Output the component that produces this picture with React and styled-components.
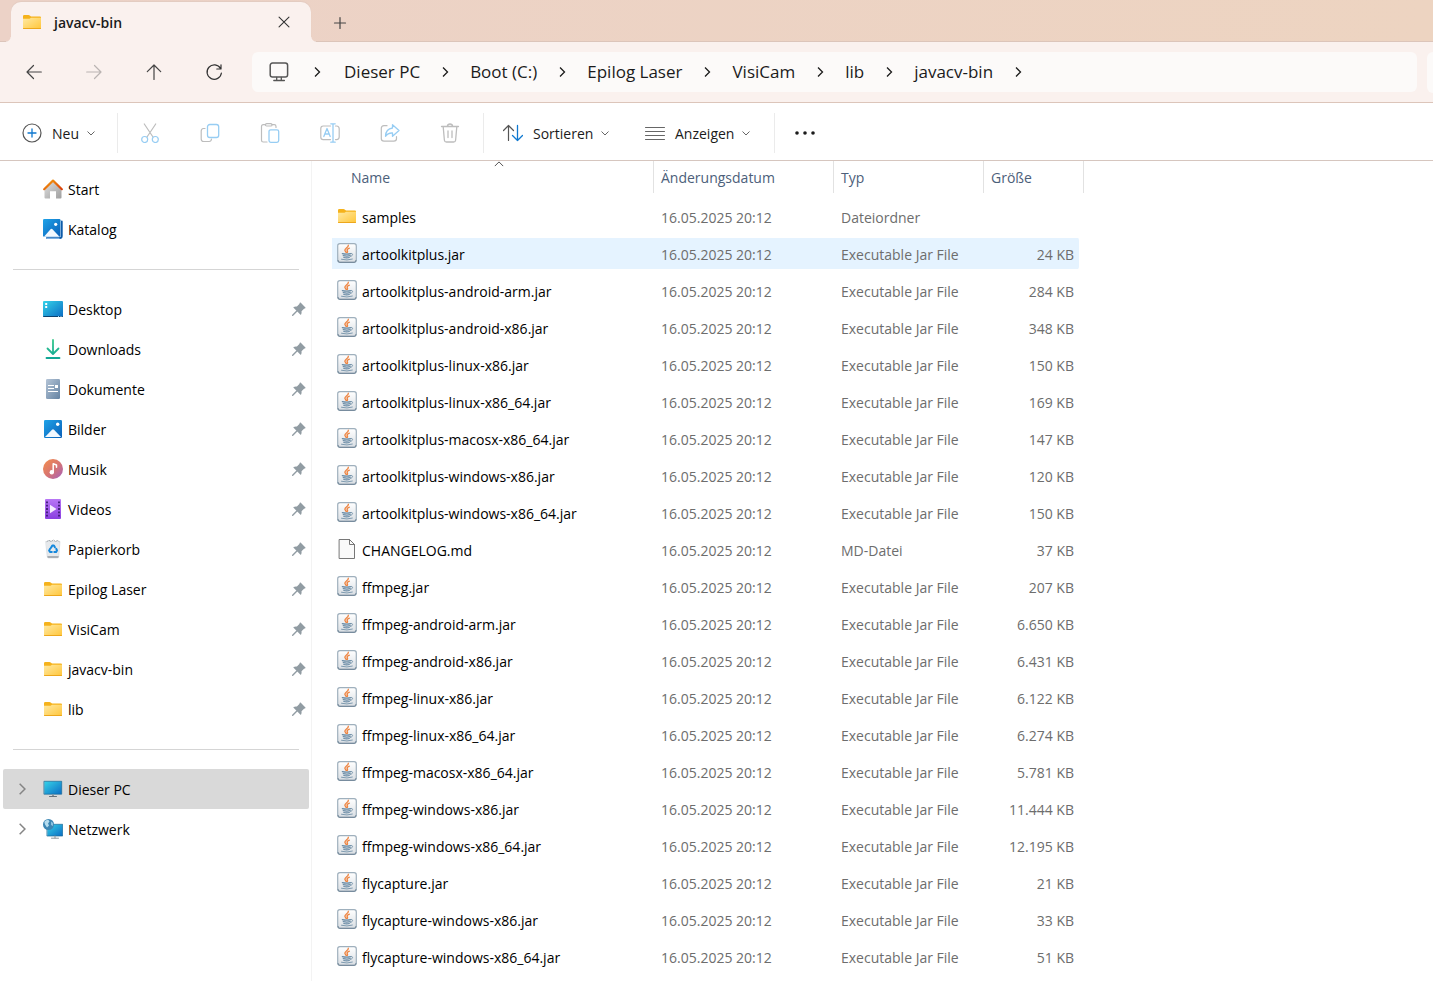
import React, { useState } from 'react'
import styled, { createGlobalStyle } from 'styled-components'

const GlobalStyle = createGlobalStyle`
* {
  box-sizing: border-box;
}
body {
  margin: 0;
  background: #ffffff;
  color: #000000;
  font-family: 'Open Sans', 'Noto Sans', sans-serif;
  font-size: 14px;
  line-height: 20px;
}
button {
  margin: 0;
  padding: 0;
  border: 0;
  background: none;
  color: inherit;
  font: inherit;
}
a {
  color: inherit;
  text-decoration: none;
}
svg {
  display: block;
  flex: none;
}
`
const Window = styled.div`
display: flex;
flex-direction: column;
min-height: 100vh;
`
const TabStrip = styled.header`
display: flex;
align-items: flex-end;
height: 42px;
padding-left: 11px;
background: linear-gradient(to right, #ecd2c7, #edd4c1);
box-shadow: inset 0 -1px #dcc5ba;
`
const Tab = styled.div`
position: relative;
display: flex;
align-items: center;
width: 300px;
height: 40px;
padding: 0 17px 0 11px;
border-radius: 10px 10px 0 0;
background: #faf1ee;
box-shadow: 0 -1px 1px #e3cbc0;
&::before,
&::after {
  content: '';
  position: absolute;
  bottom: 0;
  width: 5px;
  height: 5px;
}
&::before {
  right: 100%;
  background: radial-gradient(circle at 0 0, transparent 4px, #faf1ee 5px);
}
&::after {
  left: 100%;
  background: radial-gradient(circle at 100% 0, transparent 4px, #faf1ee 5px);
}
`
const TabTitle = styled.span`
flex: 1;
margin-left: 12px;
padding-top: 2px;
color: #1b1b1b;
font-weight: 600;
`
const TabButton = styled.button`
display: flex;
align-items: center;
justify-content: center;
width: 20px;
height: 20px;
`
const NewTab = styled(TabButton)`
width: 58px;
height: 38px;
`
const NavBar = styled.nav`
display: flex;
align-items: center;
height: 61px;
padding-left: 4px;
border-bottom: 1px solid #dcc5ba;
background: #faf1ee;
`
const NavButton = styled.button`
display: flex;
align-items: center;
justify-content: center;
width: 60px;
height: 40px;
opacity: ${props => props.disabled ? 0.35 : 1};
`
const Address = styled.div`
display: flex;
flex: 1;
align-items: center;
height: 40px;
margin: 0 10px 0 8px;
padding-left: 17px;
border-radius: 6px;
background: #fcfaf9;
color: #1b1b1b;
font-size: 17px;
line-height: 24px;
`
const CrumbArrow = styled.span`
display: flex;
justify-content: center;
width: ${props => props.$first ? 55 : 50}px;
`
const Search = styled.input`
width: 6px;
height: 41px;
padding: 0;
border: 0;
border-radius: 6px 0 0 6px;
background: #fcfaf9;
`
const Toolbar = styled.div`
display: flex;
align-items: center;
height: 58px;
padding-top: 2px;
border-bottom: 1px solid #d6c6bf;
color: #1b1b1b;
`
const ToolGroup = styled.div`
display: flex;
align-items: center;
height: 40px;
padding: ${props => props.$pad || 0};
border-right: ${props => props.$last ? 0 : 1}px solid #ebebeb;
`
const MenuButton = styled.button`
display: flex;
align-items: center;
gap: 6px;
width: ${props => props.$short ? 113 : 142}px;
padding-left: 18px;
white-space: nowrap;
span {
  padding: 2px 0 0 4px;
}
`
const ToolButton = styled.button`
display: flex;
align-items: center;
justify-content: center;
width: 60px;
height: 40px;
`
const Body = styled.div`
display: flex;
flex: 1;
`
const Sidebar = styled.aside`
flex: none;
width: 312px;
padding: 8px 2px 0 3px;
border-right: 1px solid #f3f3f3;
`
const NavList = styled.ul`
margin: 0;
padding: 0;
list-style: none;
`
const Divider = styled.hr`
height: 1px;
margin: 20px 10px 19px;
border: 0;
background: #d5d5d5;
`
const Place = styled.a`
display: grid;
grid-template-columns: 40px 20px 1fr 17px;
align-items: center;
height: 40px;
border-radius: 2px;
background: ${props => props.$active ? '#d9d9d9' : 'transparent'};
`
const Expander = styled.span`
display: flex;
justify-content: center;
padding-right: 2px;
`
const PlaceIcon = styled.span`
display: flex;
justify-content: center;
`
const PlaceName = styled.span`
padding: 2px 0 0 5px;
`
const Main = styled.main`
flex: 1;
min-width: 0;
padding-left: 20px;
`
const Files = styled.table`
width: 752px;
table-layout: fixed;
border-spacing: 0;
`
const Head = styled.th`
width: ${props => props.$width}px;
height: 37px;
padding: 0 0 5px;
font-weight: 400;
text-align: left;
`
const HeadButton = styled.button`
position: relative;
display: block;
width: 100%;
height: 32px;
padding: 2px 7px 0 ${props => props.$first ? 19 : 7}px;
border-right: 1px solid #e2e2e2;
color: #4c607a;
text-align: left;
`
const SortMark = styled.span`
position: absolute;
top: -2px;
left: 12px;
right: 0;
display: flex;
justify-content: center;
`
const Row = styled.tr`
td {
  background: ${props => props.$active ? '#e5f3ff' : 'transparent'};
  background-clip: padding-box;
}
`
const Cell = styled.td`
height: 37px;
padding: 2px 7px 0;
border: solid transparent;
border-width: 3px 0;
color: #6d6d6d;
white-space: nowrap;
`
const NameCell = styled(Cell)`
padding: 0 5px 2px;
border-radius: 3px 0 0 3px;
color: #000000;
`
const SizeCell = styled(Cell)`
padding: 2px 5px 0;
border-right-width: 5px;
border-radius: 0 6px 6px 0;
text-align: right;
`
const FileName = styled.a`
display: flex;
align-items: center;
gap: 5px;
span {
  padding-top: 4px;
}
`

const Icon = ({ size = 20, children }) => (
    <svg width={size} height={size} viewBox="0 0 20 20" fill="none" strokeLinecap="round" strokeLinejoin="round" aria-hidden="true">
        {children}
    </svg>
)

const Chevron = ({ dir = 'right', size = 12, color = '#1b1b1b', width = 1.3 }) => {
    const paths = { right: 'M4 1.5 8.5 6 4 10.5', down: 'M2.5 4.5 6 8l3.5-3.5', up: 'M1 8.500 6 3.5 11 8.500' }
    return (
        <svg width={size} height={size} viewBox="0 0 12 12" fill="none" aria-hidden="true">
            <path d={paths[dir]} stroke={color} strokeWidth={width} />
        </svg>
    )
}

/* Gradients are shared by every icon on the page */
const Gradients = () => (
    <svg width="0" height="0" style={{ position: 'absolute' }} aria-hidden="true">
        <defs>
            <linearGradient id="folder" x1="0" y1="0" x2="1" y2="1">
                <stop offset="0" stopColor="#ffe9a3" /><stop offset="1" stopColor="#ffc63a" />
            </linearGradient>
            <linearGradient id="blue" x1="0" y1="0" x2="1" y2="1">
                <stop offset="0" stopColor="#1fa3e8" /><stop offset="1" stopColor="#0a5fb8" />
            </linearGradient>
            <linearGradient id="screen" x1="0" y1="0" x2="1" y2="1">
                <stop offset="0" stopColor="#35d3e8" /><stop offset="1" stopColor="#0b6cc4" />
            </linearGradient>
            <linearGradient id="green" x1="0" y1="0" x2="0" y2="20" gradientUnits="userSpaceOnUse">
                <stop offset="0" stopColor="#38c98a" /><stop offset="1" stopColor="#0fa596" />
            </linearGradient>
            <linearGradient id="roof" x1="0" y1="0" x2="1" y2="1">
                <stop offset="0" stopColor="#f5a00f" /><stop offset="1" stopColor="#d93f0b" />
            </linearGradient>
            <linearGradient id="wall" x1="0" y1="0" x2="1" y2="1">
                <stop offset="0" stopColor="#dedede" /><stop offset="1" stopColor="#9f9f9f" />
            </linearGradient>
            <linearGradient id="music" x1="0" y1="0" x2="1" y2="1">
                <stop offset="0" stopColor="#f58f4c" /><stop offset="0.5" stopColor="#d9766f" /><stop offset="1" stopColor="#a35fc0" />
            </linearGradient>
            <linearGradient id="video" x1="0" y1="0" x2="0" y2="1">
                <stop offset="0" stopColor="#b877f5" /><stop offset="1" stopColor="#8a3fe0" />
            </linearGradient>
            <linearGradient id="paper" x1="0" y1="0" x2="1" y2="1">
                <stop offset="0" stopColor="#b4c4d6" /><stop offset="1" stopColor="#6483a3" />
            </linearGradient>
            <linearGradient id="jar" x1="0" y1="0" x2="0" y2="1">
                <stop offset="0" stopColor="#ffffff" /><stop offset="1" stopColor="#d9dee3" />
            </linearGradient>
        </defs>
    </svg>
)

const FolderIcon = () => (
    <Icon>
        <path d="M1 4.2q0-1.2 1.200-1.200h4.300q.7 0 1.200.5L9 4.500h9q1 0 1 1V10H1z" fill="#f5b21b" />
        <path d="M1 6.800h6.500L9 5.700h10v10.500q0 .8-.8.800H1.800q-.8 0-.8-.8z" fill="url(#folder)" />
        <path d="M1.500 16.500h17" stroke="#eda71c" />
    </Icon>
)
const JarIcon = () => (
    <Icon>
        <rect x=".7" y=".7" width="18.600" height="18.600" rx="2.200" fill="url(#jar)" stroke="#9fb0bd" strokeWidth="1.200" />
        <path d="M1 17.500q0 1.800 1.800 1.800h14.400q1.800 0 1.800-1.800" stroke="#6f8496" />
        <path d="M11.300 2.300c.6 2-3.600 2.800-3.400 5 .1 1 1 1.400 1.300 2.200M12.300 5.200c-1.500.6-2.500 1.200-2.200 2.200.2.700.8 1 .2 2" stroke="#ee8440" strokeWidth="1.400" />
        <path d="M5.300 10.700q4.500 1 8.500 0M6.200 12.700q3.800.9 7 0M6.800 14.500q3 .8 5.500 0" stroke="#6b8ca6" strokeWidth="1.200" />
        <path d="M14 10.500c2.700-.5 2 2.600-.6 2.900M4.500 16.300q5.500 1.500 10.800-.2" stroke="#7f9bb0" />
    </Icon>
)
const FileIcon = () => (
    <Icon>
        <path d="M2.500.5h10l5 5v14h-15z" fill="#fafafa" stroke="#777" strokeLinejoin="miter" />
        <path d="M12.500.5v5h5" stroke="#777" />
    </Icon>
)
const HomeIcon = () => (
    <Icon>
        <path d="M10 3 1.500 11v7.500q0 1 1 1H7v-7.300h6v7.300h4.500q1 0 1-1V11z" fill="url(#wall)" />
        <path d="M1.200 10.200 10 1.600l8.800 8.600" stroke="url(#roof)" strokeWidth="2.200" />
    </Icon>
)
const GalleryIcon = () => (
    <Icon>
        <path d="M18.800 2.500V17q0 2-2 2H4" stroke="#0d5ba8" strokeWidth="1.800" />
        <path d="M4 19.200h12" stroke="#7fb1e3" strokeWidth="1.500" />
        <rect width="17.500" height="17.800" rx="1.200" fill="url(#blue)" />
        <path d="m1 17.800 6.500-7.500q1-1 2 0l7 7.500z" fill="#f3f9ff" />
        <circle cx="12.700" cy="5.300" r="1.600" fill="#fff" />
    </Icon>
)
const PictureIcon = () => (
    <Icon>
        <rect x="1" y="1" width="18" height="18" rx="1.200" fill="url(#blue)" />
        <path d="m2 18 7-7.300q1-.9 2 0l7 7.300z" fill="#f3f9ff" />
        <circle cx="14.700" cy="5.300" r="1.700" fill="#fff" />
    </Icon>
)
const DesktopIcon = () => (
    <Icon>
        <rect y="2" width="20" height="16" rx="1" fill="url(#screen)" />
        <path d="M0 17h20q0 1-1 1H1q-1 0-1-1z" fill="#0b4270" />
        <path d="M2.200 4h2v2h-2zM2.200 7h2v2h-2z" fill="#fff" />
        <path d="M15 17.500h1m1.500 0h1" stroke="#9fd8f2" strokeLinecap="butt" />
    </Icon>
)
const DownloadIcon = () => (
    <Icon>
        <path d="M10 1v13.500M4.500 9.500 10 15l5.500-5.500M3.500 19h13" stroke="url(#green)" strokeWidth="1.800" />
    </Icon>
)
const DocumentIcon = () => (
    <Icon>
        <rect x="3" width="14" height="20" rx="1.200" fill="url(#paper)" />
        <path d="M5 6.500h6M5 9.500h6M5 12.500h10" stroke="#fff" strokeLinecap="butt" />
        <path d="M12 6h3v3h-3z" fill="#fff" />
    </Icon>
)
const MusicIcon = () => (
    <Icon>
        <circle cx="10" cy="10" r="10" fill="url(#music)" />
        <circle cx="8.800" cy="13.200" r="2.200" fill="#fff" />
        <path d="M10.200 13V4.700L13.500 6v2.200" stroke="#fff" strokeWidth="1.500" />
    </Icon>
)
const VideoIcon = () => (
    <Icon>
        <rect x="2" width="16" height="20" rx="1" fill="url(#video)" />
        <path d="M4 2.500v15M16 2.500v15" stroke="#3d1c73" strokeWidth="1.800" strokeDasharray="1.800 1.500" strokeLinecap="butt" />
        <path d="M7 5.700 13.500 10 7 14.300z" fill="#f5ecff" />
    </Icon>
)
const TrashBinIcon = () => (
    <Icon>
        <path d="M3 2.500h14L15.700 18q-.1 1-1.200 1h-9q-1.100 0-1.200-1z" fill="#e6e9ec" stroke="#ced3d8" strokeWidth=".6" />
        <path d="M4.300 17h11.400l-.2 1.300q-.1.700-1 .7h-9q-.9 0-1-.7z" fill="#a9afb5" />
        <path d="m4 2.500 2-1.300 2 1.300 2.500-1.500 2 1.500 2-1 1.500 1" stroke="#a4a9ae" strokeWidth="1" strokeDasharray="1.500 1.300" />
        <path d="M8 8.700 9.300 6.600h1.600l1 1.700M13.300 9.800l.7 1.700-1 1.600h-1.700M8.800 13.100H7l-.9-1.500.9-1.700" stroke="#1588dc" strokeWidth="2" />
    </Icon>
)
const MonitorIcon = () => (
    <Icon>
        <rect x="1.300" y="2.300" width="17.400" height="12.900" fill="url(#screen)" stroke="#1b6a97" strokeWidth=".7" />
        <path d="M9 15.500h2V17H9z" fill="#8b949c" />
        <path d="M6.500 17.500h7" stroke="#66717a" />
    </Icon>
)
const NetworkIcon = () => (
    <Icon>
        <rect x="4.300" y="5.300" width="15.400" height="11.700" fill="url(#screen)" stroke="#1b6a97" strokeWidth=".7" />
        <path d="M12 17v2M8.500 19.200h7" stroke="#8b949c" />
        <circle cx="5.500" cy="5.500" r="5.500" fill="#3c86b4" />
        <path d="M1.300 2.800Q3 .8 5.300.7L6.500 2.500 5 4.500 6 6.500 4 8.500 2 5.500z" fill="#b5dcee" />
        <path d="m8 2.500 2 1.500v3L8 6z" fill="#8cc3df" />
    </Icon>
)
const PinIcon = () => (
    <Icon size={14}>
        <path d="M12.200.8 19.200 7.800q.6.700-.3 1.100l-1.700.6-3.600 3.600q.5 2.700-.6 4.700-.5.700-1.200.1L2.200 8.300q-.6-.7.200-1.200 2-1 4.600-.6l3.500-3.600.6-1.800q.4-.9 1.100-.3z" fill="#919ca3" />
        <path d="m7 13-6 6" stroke="#919ca3" strokeWidth="2" />
    </Icon>
)
const PcOutline = () => (
    <Icon>
        <rect x="1.200" y="1" width="17.400" height="14" rx="2.300" stroke="#555" strokeWidth="1.500" />
        <path d="M7.700 15.500v2.700M12.300 15.500v2.700M4.800 18.500h10.600" stroke="#555" strokeWidth="1.300" />
    </Icon>
)
const BackIcon = () => <Icon><path d="M17.300 10H3M9.500 3.500 3 10l6.500 6.500" stroke="#444" strokeWidth="1.200" /></Icon>
const ForwardIcon = () => <Icon><path d="M2.700 10H17M10.500 3.500 17 10l-6.500 6.500" stroke="#444" strokeWidth="1.200" /></Icon>
const UpIcon = () => <Icon><path d="M10 17.500V3M3.300 9.700 10 3l6.700 6.700" stroke="#444" strokeWidth="1.200" /></Icon>
const ReloadIcon = () => <Icon><path d="M16.500 6.500A7.200 7.200 0 1 0 17.400 11M17 2.800v4.200h-4.200" stroke="#333" strokeWidth="1.200" /></Icon>

const NewIcon = () => (
    <Icon>
        <circle cx="10" cy="10" r="9" stroke="#555" strokeWidth="1.200" />
        <path d="M10 6v8M6 10h8" stroke="#0f78d0" strokeWidth="1.300" />
    </Icon>
)
const CutIcon = () => (
    <Icon>
        <path d="M4.300 1 13 14M15.700 1 7 14" stroke="#bdbdbd" strokeWidth="1.200" />
        <circle cx="4.700" cy="16.500" r="3" stroke="#97cdf3" strokeWidth="1.200" />
        <circle cx="15.300" cy="16.500" r="3" stroke="#97cdf3" strokeWidth="1.200" />
    </Icon>
)
const CopyIcon = () => (
    <Icon>
        <path d="M5 5.500H3.500Q1.200 5.800 1.200 8v8q0 2.500 2.500 2.500h5.500q2 0 2.300-2.500" stroke="#bdbdbd" strokeWidth="1.200" />
        <rect x="7.500" y="1.500" width="11.200" height="13" rx="2.300" stroke="#97cdf3" strokeWidth="1.300" />
    </Icon>
)
const PasteIcon = () => (
    <Icon>
        <path d="M5.500 1.700H3.300q-1.800 0-1.800 1.800v13.700q0 1.800 1.800 1.800H7M12 1.700h2.200q1.800 0 1.800 1.800v1" stroke="#bdbdbd" strokeWidth="1.200" />
        <rect x="5.500" y=".7" width="6.500" height="2.300" rx="1.100" stroke="#bdbdbd" strokeWidth="1.200" />
        <rect x="9" y="6.800" width="9.700" height="12.500" rx="1.700" stroke="#97cdf3" strokeWidth="1.300" />
    </Icon>
)
const RenameIcon = () => (
    <Icon>
        <path d="M10.500 3H3.200Q.8 3 .8 5.400v8.800q0 2.400 2.400 2.400h7.300M15.500 3h1q2.700.2 2.700 2.700v8.200q0 2.500-2.700 2.700h-1" stroke="#bdbdbd" strokeWidth="1.200" />
        <path d="m3.800 13.500 3.200-8 3.200 8M4.900 11h4.200M13 .8v18.400M10.800.8h4.400M10.800 19.200h4.400" stroke="#97cdf3" strokeWidth="1.300" />
    </Icon>
)
const ShareIcon = () => (
    <Icon>
        <path d="M7 2.700H4Q1.300 2.700 1.300 5.300v10.200q0 2.700 2.700 2.700h9.800q2.700 0 2.700-2.700V13.500" stroke="#bdbdbd" strokeWidth="1.200" />
        <path d="M12.500 5V1.700L19 7.500l-6.500 5.800V10q-4.500-.3-7 3.300Q5.800 5.800 12.500 5z" stroke="#97cdf3" strokeWidth="1.300" />
    </Icon>
)
const DeleteIcon = () => (
    <Icon>
        <path d="M1.500 3.500h17M3.200 3.700l1.200 13.500q.2 1.800 2 1.800h7.200q1.800 0 2-1.800l1.200-13.500M7.300 3.300q.4-2.300 2.700-2.300t2.700 2.300M8 8v6.500M12 8v6.500" stroke="#bdbdbd" strokeWidth="1.300" />
    </Icon>
)
const SortIcon = () => (
    <Icon>
        <path d="M5.500 17.500V2.500M.5 7.500l5-5 5 5" stroke="#555" strokeWidth="1.200" />
        <path d="M14.500 2.500v15M9.500 12.500l5 5 5-5" stroke="#0f78d0" strokeWidth="1.300" />
    </Icon>
)
const ViewIcon = () => <Icon><path d="M.5 4.500h19M.5 8.500h19M.5 12.500h19M.5 16.500h19" stroke="#666" /></Icon>
const MoreIcon = () => (
    <Icon>
        <circle cx="2" cy="10" r="1.800" fill="#1b1b1b" />
        <circle cx="10" cy="10" r="1.800" fill="#1b1b1b" />
        <circle cx="18" cy="10" r="1.800" fill="#1b1b1b" />
    </Icon>
)

const crumbs = ['Dieser PC', 'Boot (C:)', 'Epilog Laser', 'VisiCam', 'lib', 'javacv-bin']

const tools = [
    ['Ausschneiden', CutIcon],
    ['Kopieren', CopyIcon],
    ['Einfügen', PasteIcon],
    ['Umbenennen', RenameIcon],
    ['Freigeben', ShareIcon],
    ['Löschen', DeleteIcon],
]

const home = [
    ['Start', HomeIcon],
    ['Katalog', GalleryIcon],
]
const pinned = [
    ['Desktop', DesktopIcon],
    ['Downloads', DownloadIcon],
    ['Dokumente', DocumentIcon],
    ['Bilder', PictureIcon],
    ['Musik', MusicIcon],
    ['Videos', VideoIcon],
    ['Papierkorb', TrashBinIcon],
    ['Epilog Laser', FolderIcon],
    ['VisiCam', FolderIcon],
    ['javacv-bin', FolderIcon],
    ['lib', FolderIcon],
]
const devices = [
    ['Dieser PC', MonitorIcon],
    ['Netzwerk', NetworkIcon],
]

const files = [
    ['samples', ''],
    ['artoolkitplus.jar', '24 KB'],
    ['artoolkitplus-android-arm.jar', '284 KB'],
    ['artoolkitplus-android-x86.jar', '348 KB'],
    ['artoolkitplus-linux-x86.jar', '150 KB'],
    ['artoolkitplus-linux-x86_64.jar', '169 KB'],
    ['artoolkitplus-macosx-x86_64.jar', '147 KB'],
    ['artoolkitplus-windows-x86.jar', '120 KB'],
    ['artoolkitplus-windows-x86_64.jar', '150 KB'],
    ['CHANGELOG.md', '37 KB'],
    ['ffmpeg.jar', '207 KB'],
    ['ffmpeg-android-arm.jar', '6.650 KB'],
    ['ffmpeg-android-x86.jar', '6.431 KB'],
    ['ffmpeg-linux-x86.jar', '6.122 KB'],
    ['ffmpeg-linux-x86_64.jar', '6.274 KB'],
    ['ffmpeg-macosx-x86_64.jar', '5.781 KB'],
    ['ffmpeg-windows-x86.jar', '11.444 KB'],
    ['ffmpeg-windows-x86_64.jar', '12.195 KB'],
    ['flycapture.jar', '21 KB'],
    ['flycapture-windows-x86.jar', '33 KB'],
    ['flycapture-windows-x86_64.jar', '51 KB'],
]

const kindOf = name => {
    if (name.endsWith('.jar')) return ['Executable Jar File', JarIcon]
    if (name.endsWith('.md')) return ['MD-Datei', FileIcon]
    return ['Dateiordner', FolderIcon]
}

const Places = ({ items, pin, expand, current }) => (
    <NavList>
        {items.map(([name, Glyph]) => (
            <li key={name}>
                <Place href="#" $active={name === current}>
                    <Expander>{expand && <Chevron size={14} color="#858585" />}</Expander>
                    <PlaceIcon><Glyph /></PlaceIcon>
                    <PlaceName>{name}</PlaceName>
                    {pin && <PinIcon />}
                </Place>
            </li>
        ))}
    </NavList>
)

export default function App() {
    const [selected, setSelected] = useState('artoolkitplus.jar')

    return (
        <>
            <GlobalStyle />
            <Gradients />
            <Window>
                <TabStrip>
                    <Tab>
                        <FolderIcon />
                        <TabTitle>javacv-bin</TabTitle>
                        <TabButton aria-label="Tab schließen">
                            <Icon size={18}><path d="m4.500 4.500 11 11m0-11-11 11" stroke="#333" strokeWidth="1.200" /></Icon>
                        </TabButton>
                    </Tab>
                    <NewTab aria-label="Neuer Tab">
                        <Icon><path d="M10 4.500v11M4.500 10h11" stroke="#444" strokeWidth="1.200" /></Icon>
                    </NewTab>
                </TabStrip>
                <NavBar>
                    <NavButton aria-label="Zurück"><BackIcon /></NavButton>
                    <NavButton aria-label="Vorwärts" disabled><ForwardIcon /></NavButton>
                    <NavButton aria-label="Nach oben"><UpIcon /></NavButton>
                    <NavButton aria-label="Aktualisieren"><ReloadIcon /></NavButton>
                    <Address>
                        <PcOutline />
                        <CrumbArrow $first><Chevron /></CrumbArrow>
                        {crumbs.map(name => (
                            <React.Fragment key={name}>
                                <a href="#">{name}</a>
                                <CrumbArrow><Chevron /></CrumbArrow>
                            </React.Fragment>
                        ))}
                    </Address>
                    <Search type="search" aria-label="Suchen" />
                </NavBar>
                <Toolbar>
                    <ToolGroup $pad="0 0 0 4px">
                        <MenuButton $short><NewIcon /><span>Neu</span><Chevron dir="down" color="#666" width={1} /></MenuButton>
                    </ToolGroup>
                    <ToolGroup $pad="0 3px 0 2px">
                        {tools.map(([label, Glyph]) => (
                            <ToolButton key={label} aria-label={label}><Glyph /></ToolButton>
                        ))}
                    </ToolGroup>
                    <ToolGroup $pad="0 5px 0 1px">
                        <MenuButton><SortIcon /><span>Sortieren</span><Chevron dir="down" color="#666" width={1} /></MenuButton>
                        <MenuButton><ViewIcon /><span>Anzeigen</span><Chevron dir="down" color="#666" width={1} /></MenuButton>
                    </ToolGroup>
                    <ToolGroup $last>
                        <ToolButton aria-label="Mehr anzeigen"><MoreIcon /></ToolButton>
                    </ToolGroup>
                </Toolbar>
                <Body>
                    <Sidebar>
                        <Places items={home} />
                        <Divider />
                        <Places items={pinned} pin />
                        <Divider />
                        <Places items={devices} expand current="Dieser PC" />
                    </Sidebar>
                    <Main>
                        <Files>
                            <thead>
                                <tr>
                                    <Head $width={322}>
                                        <HeadButton $first>
                                            Name
                                            <SortMark><Chevron dir="up" size={10} color="#444" width={1.1} /></SortMark>
                                        </HeadButton>
                                    </Head>
                                    <Head $width={180}><HeadButton>Änderungsdatum</HeadButton></Head>
                                    <Head $width={150}><HeadButton>Typ</HeadButton></Head>
                                    <Head $width={100}><HeadButton>Größe</HeadButton></Head>
                                </tr>
                            </thead>
                            <tbody>
                                {files.map(([name, size]) => {
                                    const [kind, Glyph] = kindOf(name)
                                    return (
                                        <Row key={name} $active={name === selected} onClick={() => setSelected(name)}>
                                            <NameCell><FileName href="#"><Glyph /><span>{name}</span></FileName></NameCell>
                                            <Cell>16.05.2025 20:12</Cell>
                                            <Cell>{kind}</Cell>
                                            <SizeCell>{size}</SizeCell>
                                        </Row>
                                    )
                                })}
                            </tbody>
                        </Files>
                    </Main>
                </Body>
            </Window>
        </>
    )
}
